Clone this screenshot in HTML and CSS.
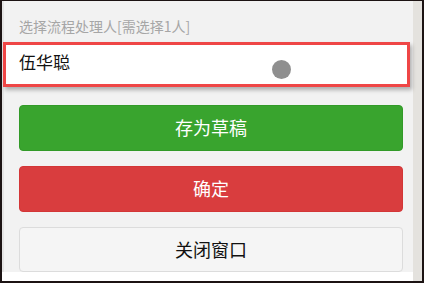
FILE: index.html
```html
<!DOCTYPE html>
<html lang="zh-CN">
<head>
<meta charset="utf-8">
<link rel="stylesheet" href="styles.css">
</head>
<body>
<div class="frame">
  <div class="main">
    <div class="content">
      <div class="label">选择流程处理人[需选择1人]</div>
      <div class="picker">
        <span class="picker-text">伍华聪</span>
        <span class="dot"></span>
      </div>
      <button class="btn btn-green">存为草稿</button>
      <button class="btn btn-red">确定</button>
      <button class="btn btn-light">关闭窗口</button>
    </div>
    <div class="footer"></div>
  </div>
  <div class="scrollbar"></div>
</div>
</body>
</html>
```
FILE: styles.css
```css
html, body {
  margin: 0;
  padding: 0;
  background: #ffffff;
}
body {
  font-family: "Noto Sans CJK SC", "Liberation Sans", sans-serif;
}
.frame {
  width: 424px;
  height: 283px;
  box-sizing: border-box;
  border-style: solid;
  border-color: #1c1313;
  border-width: 1px 2px 2px 2px;
  display: flex;
  overflow: hidden;
}
.main {
  flex: 1;
  display: flex;
  flex-direction: column;
  background: #ffffff;
}
.content {
  background: #f2f2f2;
  border-left: 2px solid #e4e4e4;
  height: 271px;
  box-sizing: border-box;
  padding-top: 15px;
  display: flex;
  flex-direction: column;
}
.footer {
  flex: 1;
  background: #ffffff;
}
.scrollbar {
  width: 9px;
  background: #e4e2de;
}
.label {
  padding-left: 15px;
  font-size: 14px;
  line-height: 20px;
  color: #a6a6a6;
}
.picker {
  margin-top: 6px;
  margin-left: -1px;
  width: 407px;
  height: 45px;
  box-sizing: border-box;
  border: 3px solid #ef4646;
  background: #ffffff;
  box-shadow: 2px 3px 4px rgba(0, 0, 0, 0.28);
  position: relative;
  display: flex;
  align-items: center;
  padding-left: 13px;
  padding-bottom: 5px;
}
.picker-text {
  font-size: 17px;
  line-height: 20px;
  color: #111111;
}
.dot {
  position: absolute;
  left: 266px;
  top: 15px;
  width: 19px;
  height: 19px;
  border-radius: 50%;
  background: #8f8f8f;
}
.btn {
  display: block;
  margin-left: 15px;
  width: 384px;
  height: 46px;
  box-sizing: border-box;
  border-radius: 4px;
  font-family: "Noto Sans CJK SC", "Liberation Sans", sans-serif;
  font-size: 18px;
  line-height: 20px;
  padding: 0;
  padding-bottom: 2px;
  cursor: pointer;
}
.btn-green {
  margin-top: 18px;
  background: #39a42e;
  border: 1px solid #329a28;
  color: #ffffff;
}
.btn-red {
  margin-top: 15px;
  background: #d93d3e;
  border: 1px solid #d33637;
  color: #ffffff;
}
.btn-light {
  margin-top: 15px;
  height: 45px;
  background: #f5f5f5;
  border: 1px solid #dcdcdc;
  color: #111111;
}
```
